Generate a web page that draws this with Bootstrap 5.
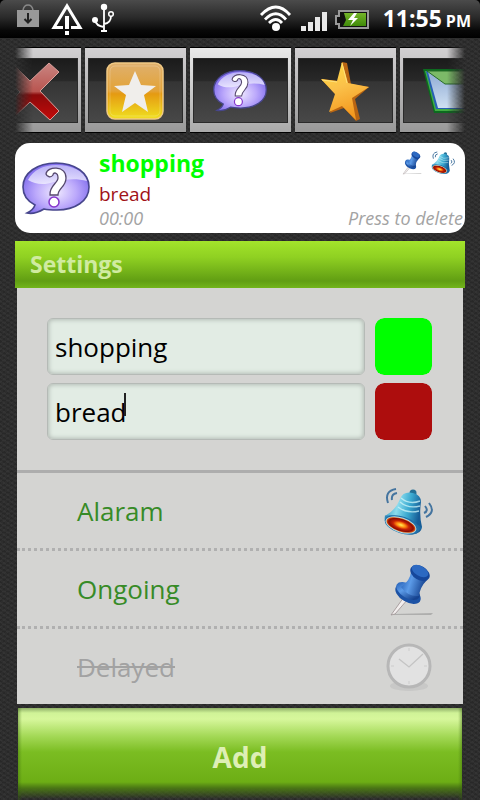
<!DOCTYPE html>
<html lang="en">
<head>
<meta charset="utf-8">
<meta name="viewport" content="width=device-width, initial-scale=1">
<title>Settings</title>
<link href="https://cdn.jsdelivr.net/npm/bootstrap@5.3.0/dist/css/bootstrap.min.css" rel="stylesheet">
<style>
body{font-family:"Open Sans","Noto Sans",sans-serif;color:#000;
 background:repeating-linear-gradient(32deg,#0000 0 2px,#ffffff08 2px 4px),repeating-linear-gradient(-32deg,#0000 0 2px,#0000001c 2px 4px),#2d2d2d}
svg{display:block;flex:none}
.status-bar{height:38px;background:linear-gradient(#4b4b4b,#2b2b2b 45%,#080808 80%,#000);border-radius:5px 5px 0 0;padding:0 9px 0 16px}
.status-wrap{background:#000}
.clock{font-size:23px;line-height:38px;font-weight:700;color:#fff}
.clock small{font-size:16px;margin-left:4px}
.page-col{padding:9px 15px 0}
.gallery{gap:4px;-webkit-mask-image:linear-gradient(90deg,#0000,#000 18px,#000 calc(100% - 18px),#0000);mask-image:linear-gradient(90deg,#0000,#000 18px,#000 calc(100% - 18px),#0000)}
.thumb{flex:none;width:101px;height:86px;padding:10px 3px 9px;border:solid #000;border-width:1px 0;background:linear-gradient(#d2d0d2,#999)}
.thumb.active{background:linear-gradient(#eaeaea,#aaa)}
.thumb-in{height:65px;border:1px solid #2b2b2b;background:linear-gradient(#1b1b1b,#292929 35%,#353535 36%,#484848);overflow:hidden}
.preview{margin-top:10px;height:90px;border-radius:15px;padding:0 2px 0 6px}
.t-title{font-size:23px;line-height:32px;font-weight:700;color:#0f0;padding-top:4px}
.t-text{font-size:19px;line-height:30px;color:#a11217}
.t-note{font-size:18px;line-height:18px;color:#a3a3a3;font-style:italic}
.head-bar{margin-top:8px;height:47px;padding-left:15px;font-size:23px;line-height:47px;font-weight:700;color:#d0eba0;background:linear-gradient(#a3e42b,#8fd022 35%,#619e13 85%,#72b51b)}
.panel{margin:0 2px;background:#d4d4d2}
.fields{padding:30px 31px 30px 30px;gap:8px;border-bottom:3px solid #adadad}
.field-row{gap:10px}
.fields .form-control:not(.swatch){height:57px;padding:0 7px;font-size:26px;color:#000;border:1px solid #b5bab6;border-radius:6px;background:#e2ece4;box-shadow:inset 0 0 4px 1px #b2bab4}
.fields .swatch{width:57px;height:57px;padding:0;border:0;border-radius:9px;background:none;flex:none}
.swatch::-webkit-color-swatch-wrapper{padding:0}
.swatch::-webkit-color-swatch{border:0!important;border-radius:9px!important}
.caret{left:77px;top:10px;width:2px;height:23px;background:#222}
.opt{height:78px;padding:2px 30px 0 60px;border:0;border-bottom:3px dotted #b0b0b0;background:none;font-size:26px;color:#378b27}
.opt:last-child{height:75px;border:0;color:#a2a2a2;text-decoration:line-through}
.add-btn{margin:4px 3px 0;height:92px;border:0;padding:5px 0 0;font-size:28px;font-weight:700;color:#deefb5;background:linear-gradient(90deg,#35620a66,#0000 4px,#0000 calc(100% - 4px),#35620a66),linear-gradient(#8faf68,#d0f397 5px,#d7f79c 11px,#a4d957 28px,#7bbd22 44px,#6dae15 74px,#4a7615 80px,#2d2d2d00 91px)}
</style>
</head>
<body>
<svg width="0" height="0" class="position-absolute" aria-hidden="true">
 <defs>
  <radialGradient id="gBub" cx=".5" cy=".58" r=".62"><stop offset="0" stop-color="#f0eaff"/><stop offset=".5" stop-color="#bba8fb"/><stop offset="1" stop-color="#7460ea"/></radialGradient>
  <linearGradient id="gGloss" x2="0" y2="1"><stop offset="0" stop-color="#c3bcf8"/><stop offset="1" stop-color="#eeecff"/></linearGradient>
  <linearGradient id="gPin" x2="1" y2=".3"><stop offset="0" stop-color="#1c56ae"/><stop offset=".45" stop-color="#5c9be8"/><stop offset="1" stop-color="#164390"/></linearGradient>
  <linearGradient id="gBell" x2="1" y2=".25"><stop offset="0" stop-color="#2188b8"/><stop offset=".4" stop-color="#8bdcee"/><stop offset=".7" stop-color="#3aa9d0"/><stop offset="1" stop-color="#165c96"/></linearGradient>
  <radialGradient id="gFire"><stop offset="0" stop-color="#fff05a"/><stop offset=".3" stop-color="#ff8a10"/><stop offset=".55" stop-color="#c82205"/><stop offset=".85" stop-color="#8a0d04"/><stop offset="1" stop-color="#e8590c"/></radialGradient>
  <linearGradient id="gX" x2="0" y2="1"><stop offset="0" stop-color="#c98581"/><stop offset=".5" stop-color="#b95550"/><stop offset=".56" stop-color="#8c0a0a"/><stop offset="1" stop-color="#c40a0a"/></linearGradient>
  <linearGradient id="gFav" x2="0" y2="1"><stop offset="0" stop-color="#dfb06e"/><stop offset=".5" stop-color="#e3a337"/><stop offset=".55" stop-color="#e59a12"/><stop offset="1" stop-color="#f0e020"/></linearGradient>
  <linearGradient id="gStar" x2=".3" y2="1"><stop offset="0" stop-color="#ffdf42"/><stop offset=".5" stop-color="#fbc14a"/><stop offset="1" stop-color="#f39a20"/></linearGradient>
  <linearGradient id="gBox" x2="0" y2="1"><stop offset="0" stop-color="#8fabd4"/><stop offset="1" stop-color="#cfe0f2"/></linearGradient>
  <linearGradient id="gBat" x2="0" y2="1"><stop offset="0" stop-color="#75b52a"/><stop offset="1" stop-color="#3f8a08"/></linearGradient>
 </defs>
 <symbol id="bubble" viewBox="0 0 70 54">
  <path d="M35 2C54 2 68 12 68 26S54 49 36 49C31 49 27 49 23 48C18 51 11 53 6 52C10 50 13 47 14 44C6 40 2 34 2 26C2 12 16 2 35 2Z" fill="url(#gBub)" stroke="#47468c" stroke-width="1.600"/>
  <path d="M35 4C51 4 63 10 66 20C55 17 44 18 33 21C24 24 15 24 7 19C12 9 23 4 35 4Z" fill="url(#gGloss)" opacity=".85"/>
  <path d="M25 13C26 5 45 4 45 17C45 26 37 27 37 34H29C28 25 37 22 37 17C37 11 32 11 32 14C30 17 26 16 25 13Z" fill="#fff" stroke="#55486e" stroke-width="1.300"/>
  <circle cx="33" cy="41" r="5" fill="#fff" stroke="#8536cc" stroke-width="1.5"/>
 </symbol>
 <symbol id="pin" viewBox="0 0 48 54">
  <path d="M10 51L48 50L46 52H8Z" fill="#888" opacity=".5"/>
  <path d="M19 34L23 36L10 51L6 52Z" fill="#f2eeee" stroke="#9a8f90" stroke-width=".8"/>
  <ellipse cx="23" cy="31" rx="14" ry="8" transform="rotate(31 23 31)" fill="#1c52a5"/>
  <ellipse cx="23" cy="28" rx="13" ry="7" transform="rotate(31 23 28)" fill="url(#gPin)"/>
  <path d="M26 9L42 17Q35 24 34 33Q23 34 16 24Q25 18 26 9Z" fill="url(#gPin)"/>
  <ellipse cx="35" cy="10" rx="10.5" ry="7" transform="rotate(30 35 10)" fill="#16479b"/>
  <ellipse cx="35" cy="8" rx="9" ry="5" transform="rotate(30 35 8)" fill="#2c69c2"/>
 </symbol>
 <symbol id="bell" viewBox="0 0 50 50">
  <circle cx="30" cy="6" r="3.500" fill="#247096"/>
  <path d="M17 12Q20 4 30 6Q38 8 38 15Q36 28 39 40Q38 47 30 47L6 38Q0 34 2 29Q13 23 17 12Z" fill="url(#gBell)"/>
  <path d="M18 11Q26 18 37 14M17 15Q25 22 37 19M15 20Q24 27 36 24" fill="none" stroke="#d0f6fa" stroke-width="1.400" opacity=".75"/>
  <path d="M2 30Q22 28 38 42" fill="none" stroke="#1f73ab" stroke-width="3" opacity=".6"/>
  <ellipse cx="19" cy="38" rx="18" ry="8.500" transform="rotate(18 19 38)" fill="#216fa8"/>
  <ellipse cx="18" cy="38" rx="16" ry="7.500" transform="rotate(18 18 38)" fill="#b4dce4"/>
  <ellipse cx="18" cy="38" rx="15" ry="6.500" transform="rotate(18 18 38)" fill="url(#gFire)"/>
  <g fill="none" stroke="#44749f" stroke-width="2"><path d="M13 2Q1 4 5 16M14 6Q8 7 9 13M46 16Q53 25 43 30M42 19Q46 24 41 26"/></g>
 </symbol>
</svg>

<header class="status-wrap">
 <div class="status-bar d-flex align-items-center">
  <svg width="104" height="38" viewBox="16 0 104 38" aria-hidden="true">
   <path d="M17 10H39V27H17Z" fill="#999"/><path d="M23 10Q24 5 28 5T33 10" fill="none" stroke="#888" stroke-width="1.5"/><path d="M28 13V22M24.500 19L28 22.500L31.500 19" fill="none" stroke="#222" stroke-width="2"/>
   <path d="M63 27.500H54L67 6L80 27.500H71" fill="none" stroke="#fff" stroke-width="3"/><path d="M65 16H69V29H65ZM65 31H69V35H65Z" fill="#fff"/>
   <path d="M104 6V31M104 27Q96 26 95 20M104 24Q111 23 111 16" fill="none" stroke="#fff" stroke-width="1.8"/><circle cx="104" cy="7" r="3.200" fill="#fff"/><circle cx="95" cy="20" r="3" fill="#fff"/><circle cx="111" cy="14" r="2.300" fill="none" stroke="#fff" stroke-width="1.5"/><path d="M101 30H107V32H101Z" fill="#fff"/>
  </svg>
  <svg class="ms-auto" width="112" height="38" viewBox="262 0 112 38" aria-hidden="true">
   <g fill="none" stroke="#fff" stroke-width="2.800"><path d="M264 15Q279 -1 293 15M268 19.500Q279 8 289 19.500M272 23Q279 16 285 23"/></g><circle cx="279" cy="27" r="4" fill="#fff"/>
   <path d="M304 26H309V31H304ZM311 22H316V31H311ZM318 17H323V31H318ZM325 12H330V31H325Z" fill="#e8e8e8"/>
   <path d="M342 11H371V28H342V24H339V16H342Z" fill="#111" stroke="#999" stroke-width="2"/><path d="M347 13H369V26H346L349 20Z" fill="url(#gBat)"/><path d="M357 13L351 20H356L353 26L361 18H357L360 13Z" fill="#fff"/>
  </svg>
  <div class="clock ms-2 ps-1">11:55<small class="fw-bold">PM</small></div>
 </div>
</header>

<main class="page-col">
 <div class="gallery d-flex justify-content-center overflow-hidden">
  <div class="thumb"><div class="thumb-in d-flex justify-content-center align-items-center">
   <svg width="60" height="60" viewBox="0 0 60 60"><path d="M2 13L12 2L30 20L49 2L59 11L40 30L59 50L50 59L30 41L11 59L2 50L20 31Z" fill="url(#gX)" stroke="#d9a09c" stroke-width="1"/></svg></div></div>
  <div class="thumb"><div class="thumb-in d-flex justify-content-center align-items-center">
   <svg width="58" height="58" viewBox="0 0 58 58"><rect x="1" y="1" width="56" height="56" rx="8" fill="url(#gFav)" stroke="#f0c985" stroke-width="1.5"/><rect x="4" y="4" width="50" height="50" rx="5" fill="none" stroke="#fff" opacity=".2"/><path d="M29 9L35 23L50 24L38 33L42 50L29 41L16 50L20 33L8 24L23 23Z" fill="#f0eeeb"/></svg></div></div>
  <div class="thumb active"><div class="thumb-in d-flex justify-content-center align-items-center"><svg width="56" height="43"><use href="#bubble"/></svg></div></div>
  <div class="thumb"><div class="thumb-in d-flex justify-content-center align-items-center">
   <svg width="50" height="60" viewBox="0 0 50 60"><path d="M22 1L27 2L31 23L49 26L35 38L40 58L36 60L24 47L10 52L16 34L1 18L19 20Z" fill="#b96512"/><path d="M22 1L28 22L49 26L32 37L36 59L22 45L9 51L15 33L1 18L17 20Z" fill="url(#gStar)"/><path d="M22 2L27 22M2 19L17 21" fill="none" stroke="#ffe27c" stroke-width="1"/></svg></div></div>
  <div class="thumb"><div class="thumb-in d-flex justify-content-center align-items-center">
   <svg width="54" height="46" viewBox="0 0 54 46"><path d="M0 1H54L44 45H11Z" fill="#0c6b1f"/><path d="M2 3H52L43 43H12Z" fill="#42ad43"/><path d="M3 3L13 41H42L51 3Z" fill="#285fb4"/><path d="M5 4L15 40H42L50 4Z" fill="url(#gBox)"/><path d="M4 3H51L46 16H22Z" fill="#7cba68" stroke="#276b29"/></svg></div></div>
 </div>

 <section class="preview bg-white d-flex">
  <svg width="70" height="54" class="align-self-center"><use href="#bubble"/></svg>
  <div class="flex-grow-1 d-flex flex-column ps-2 ms-0">
   <div class="d-flex justify-content-between ps-0">
    <div class="t-title">shopping</div>
    <div class="d-flex gap-2 pt-2 pe-1"><svg width="24" height="24"><use href="#pin"/></svg><svg width="24" height="24" class="me-1"><use href="#bell"/></svg></div>
   </div>
   <div class="t-text">bread</div>
   <div class="t-note d-flex justify-content-between"><span>00:00</span><span>Press to delete</span></div>
  </div>
 </section>

 <h1 class="head-bar mb-0">Settings</h1>
 <section class="panel">
  <form class="fields d-flex flex-column">
   <div class="field-row d-flex">
    <input class="form-control" type="text" value="shopping" aria-label="Title">
    <input class="form-control form-control-color swatch" type="color" value="#00ff00" aria-label="Title colour">
   </div>
   <div class="field-row d-flex">
    <div class="position-relative flex-grow-1"><input class="form-control" type="text" value="bread" aria-label="Text"><span class="caret position-absolute"></span></div>
    <input class="form-control form-control-color swatch" type="color" value="#ad0d0d" aria-label="Text colour">
   </div>
  </form>
  <div class="d-flex flex-column">
   <button type="button" class="opt d-flex align-items-center justify-content-between" aria-pressed="true">Alaram<svg width="50" height="50"><use href="#bell"/></svg></button>
   <button type="button" class="opt d-flex align-items-center justify-content-between" aria-pressed="true">Ongoing<svg width="48" height="54"><use href="#pin"/></svg></button>
   <button type="button" class="opt d-flex align-items-center justify-content-between" aria-pressed="false">Delayed<svg width="48" height="50" viewBox="0 0 48 50"><ellipse cx="24" cy="43" rx="19" ry="5" fill="#bbb" opacity=".5"/><circle cx="24" cy="23" r="21" fill="#e2e2e2" stroke="#b7b7b7" stroke-width="3"/><path d="M14 16L24 24L38 11" fill="none" stroke="#c4c4c4" stroke-width="1.300"/><path d="M24 5V8M24 38V41M6 23H9M39 23H42" stroke="#ccc"/></svg></button>
  </div>
 </section>
 <div class="d-grid"><button type="button" class="add-btn">Add</button></div>
</main>
<script src="https://cdn.jsdelivr.net/npm/bootstrap@5.3.0/dist/js/bootstrap.bundle.min.js"></script>
</body>
</html>
